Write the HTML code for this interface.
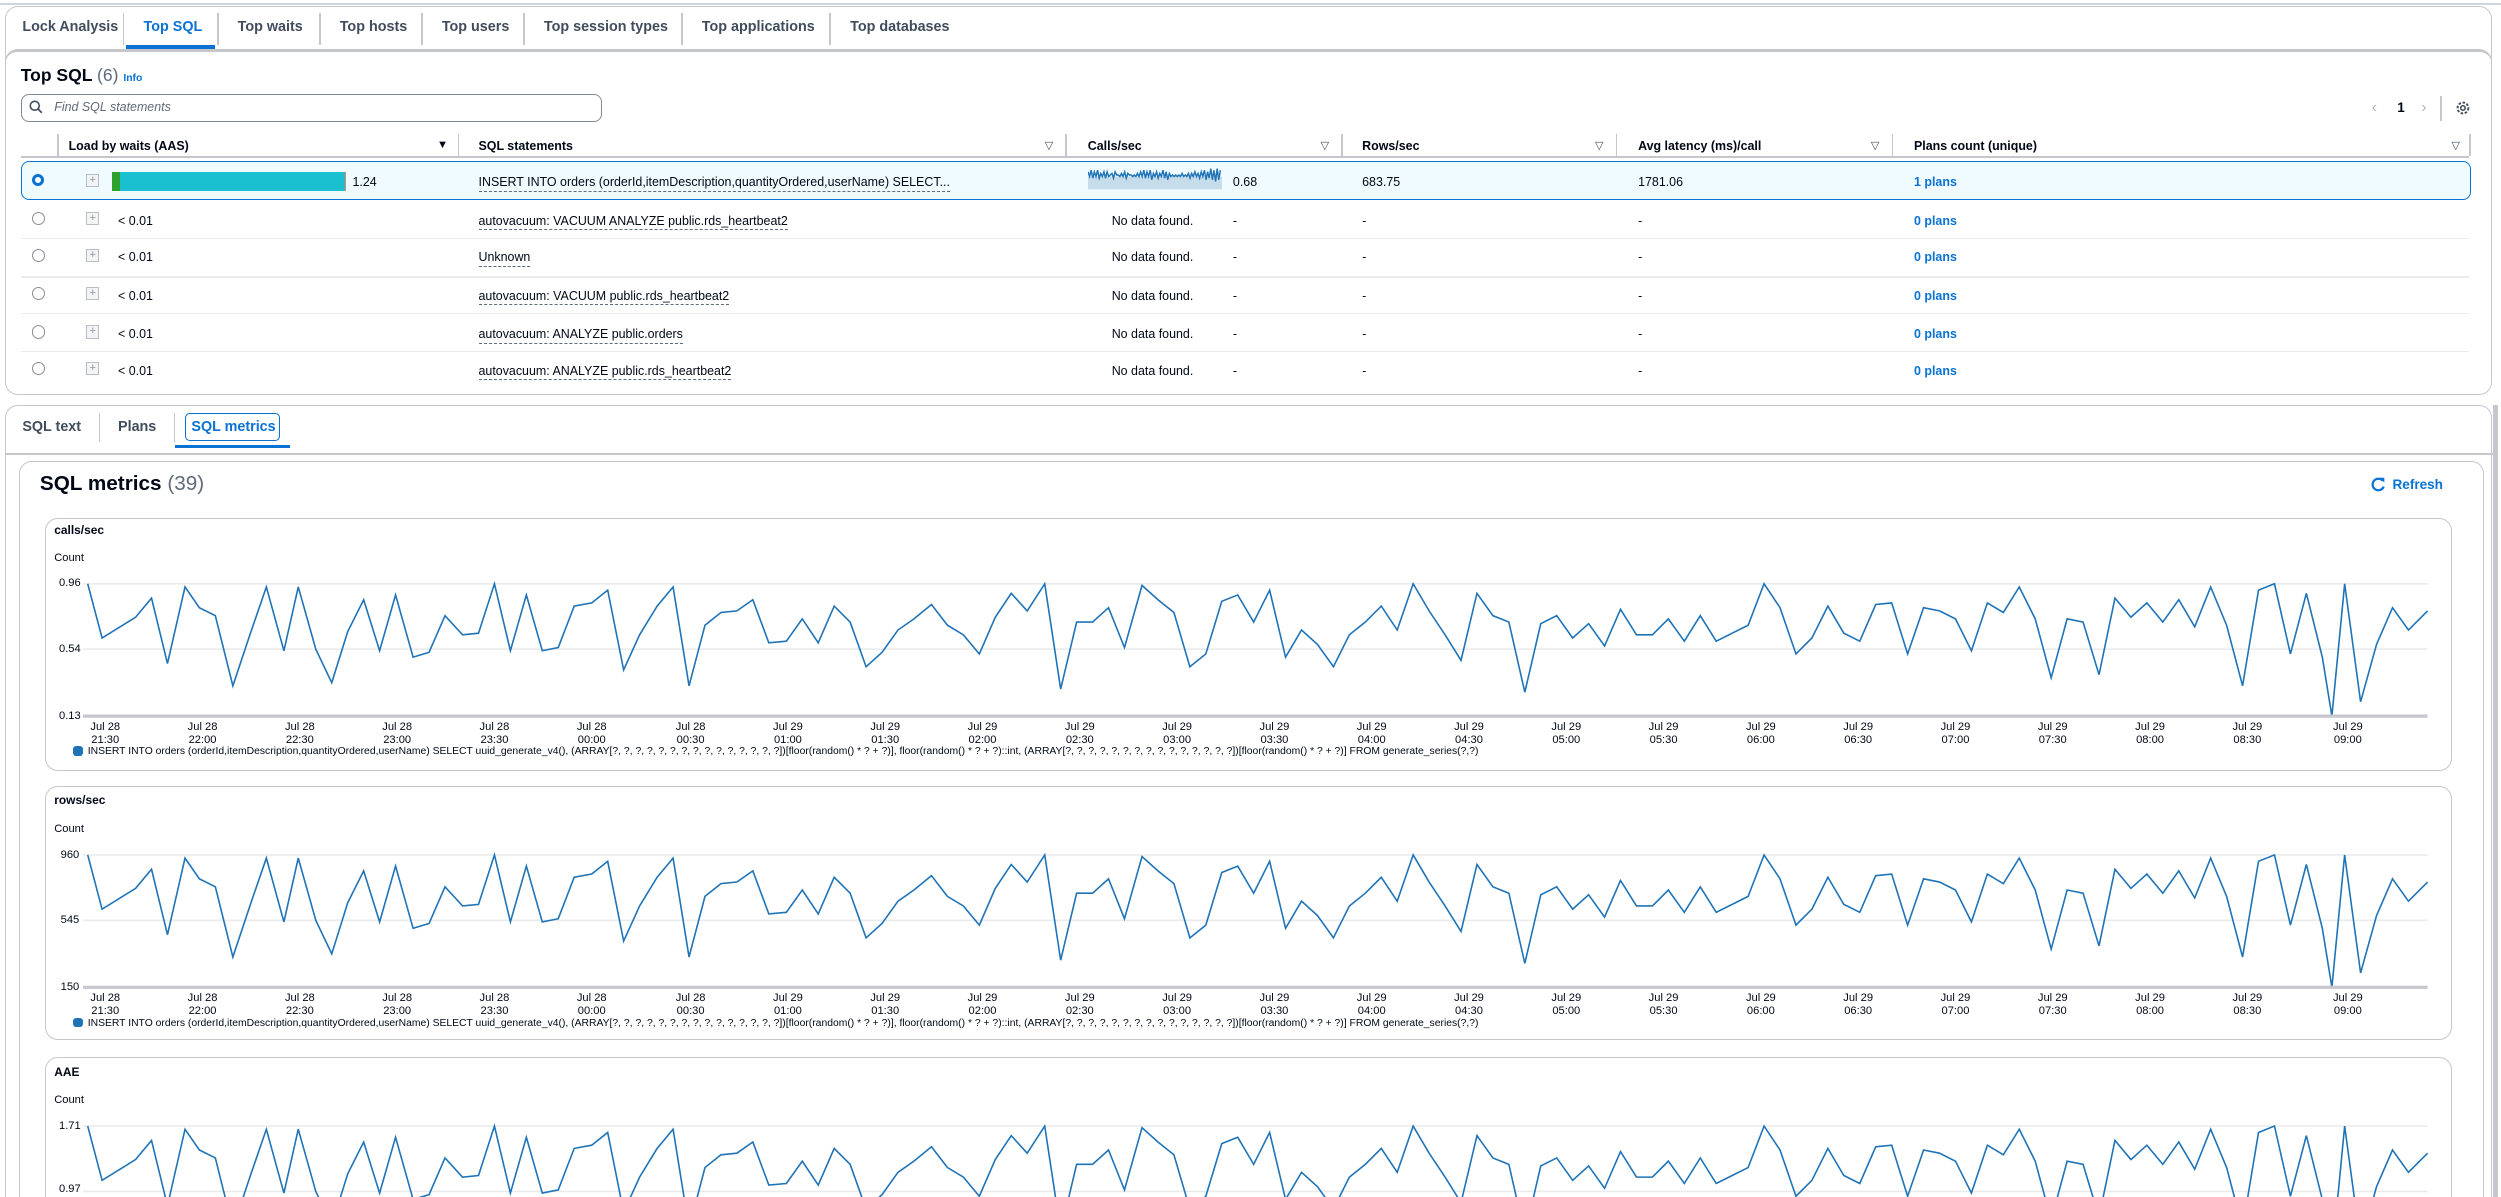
<!DOCTYPE html>
<html><head><meta charset="utf-8">
<style>
html,body{margin:0;padding:0;background:#fff;width:2501px;height:1197px;overflow:hidden}
#w{zoom:1.595;width:1568px;height:751px;position:relative;overflow:hidden;font-family:"Liberation Sans",sans-serif;color:#000716}
.a{position:absolute;white-space:nowrap}
.tab{position:absolute;top:12px;font-size:9px;font-weight:bold;color:#414d5c}
.sep{position:absolute;width:1px;background:#c6c6cd}
.th{position:absolute;top:87px;font-size:7.8px;font-weight:bold;color:#000716}
.tri{position:absolute;top:87px;font-size:7px;color:#414d5c}
.td{position:absolute;font-size:7.8px;color:#000716}
.u{border-bottom:1px dashed #5f6b7a;padding-bottom:1px}
.lnk{color:#0972d3;font-weight:bold}
.rad{position:absolute;left:20px;width:7px;height:7px;border:1px solid #8c8c94;border-radius:50%}
.exp{position:absolute;left:54px;width:7px;height:7px;border:1px solid #b6bec9;background:#f4f4f4;font-size:7px;line-height:7px;text-align:center;color:#8d99a8}
.rowline{position:absolute;left:13px;width:1535px;height:1px;background:#e9ebed}
.xl{position:absolute;font-size:7px;line-height:8px;text-align:center;width:40px;color:#000716}
.yl{position:absolute;font-size:7px;color:#000716}
.leg{position:absolute;left:46px;font-size:6.5px;color:#000716}
.leg i{display:inline-block;width:6px;height:6px;background:#1f73b7;border-radius:2px;margin-right:3px;vertical-align:-1px}
.box{position:absolute;border:1px solid #c6c6cd;border-radius:8px}
</style></head><body><div id="w">
<div class="a" style="left:0;top:2px;width:1568px;height:1px;background:#d1d5db"></div>
<div class="box" style="left:3px;top:4px;width:1558px;height:40px;border-radius:8px 8px 0 0;border-bottom:none"></div>
<div class="tab" style="left:14px">Lock Analysis</div>
<div class="sep" style="left:77px;top:8px;height:20px"></div>
<div class="tab" style="left:90px;color:#0972d3">Top SQL</div>
<div class="a" style="left:79px;top:28px;width:56px;height:3px;background:#0972d3"></div>
<div class="sep" style="left:136px;top:8px;height:20px"></div>
<div class="tab" style="left:149px">Top waits</div>
<div class="sep" style="left:200px;top:8px;height:20px"></div>
<div class="tab" style="left:213px">Top hosts</div>
<div class="sep" style="left:264px;top:8px;height:20px"></div>
<div class="tab" style="left:277px">Top users</div>
<div class="sep" style="left:328px;top:8px;height:20px"></div>
<div class="tab" style="left:341px">Top session types</div>
<div class="sep" style="left:427px;top:8px;height:20px"></div>
<div class="tab" style="left:440px">Top applications</div>
<div class="sep" style="left:520px;top:8px;height:20px"></div>
<div class="tab" style="left:533px">Top databases</div>
<!-- Top SQL panel -->
<div class="box" style="left:3px;top:31px;width:1558px;height:214px;border-top:2px solid #c6c6cd;background:#fff"></div>
<div class="a" style="left:13px;top:41px;font-size:11px;font-weight:bold">Top SQL <span style="font-weight:normal;color:#5f6b7a">(6)</span> <span style="font-size:6.5px;color:#0972d3">Info</span></div>
<div class="a" style="left:13px;top:59px;width:363px;height:16px;border:1px solid #7d8998;border-radius:5px"></div>
<svg class="a" style="left:18px;top:63px" width="9" height="9" viewBox="0 0 9 9"><circle cx="3.6" cy="3.6" r="2.8" fill="none" stroke="#414d5c" stroke-width="1"/><path d="M5.6 5.6L8 8" stroke="#414d5c" stroke-width="1.1"/></svg>
<div class="a" style="left:34px;top:63px;font-size:7.8px;font-style:italic;color:#5f6b7a">Find SQL statements</div>
<div class="a" style="left:1487px;top:62px;font-size:10px;color:#b4b4bb">&#x2039;</div>
<div class="a" style="left:1503px;top:63px;font-size:8.5px;font-weight:bold">1</div>
<div class="a" style="left:1518px;top:62px;font-size:10px;color:#b4b4bb">&#x203A;</div>
<div class="sep" style="left:1530px;top:60px;height:16px"></div>
<svg class="a" style="left:1539px;top:63px" width="10" height="10" viewBox="0 0 10 10"><circle cx="5" cy="5" r="3.4" fill="none" stroke="#414d5c" stroke-width="1.2" stroke-dasharray="1.6 1"/><circle cx="5" cy="5" r="1.4" fill="none" stroke="#414d5c" stroke-width="1"/></svg>
<div class="sep" style="left:36px;top:84px;height:14px"></div>
<div class="th" style="left:43px">Load by waits (AAS)</div><div class="tri" style="left:274px;color:#000716">&#9660;</div>
<div class="sep" style="left:287px;top:84px;height:14px"></div>
<div class="th" style="left:300px">SQL statements</div><div class="tri" style="left:655px">&#9661;</div>
<div class="sep" style="left:668px;top:84px;height:14px"></div>
<div class="th" style="left:682px">Calls/sec</div><div class="tri" style="left:828px">&#9661;</div>
<div class="sep" style="left:841px;top:84px;height:14px"></div>
<div class="th" style="left:854px">Rows/sec</div><div class="tri" style="left:1000px">&#9661;</div>
<div class="sep" style="left:1013px;top:84px;height:14px"></div>
<div class="th" style="left:1027px">Avg latency (ms)/call</div><div class="tri" style="left:1173px">&#9661;</div>
<div class="sep" style="left:1186px;top:84px;height:14px"></div>
<div class="th" style="left:1200px">Plans count (unique)</div><div class="tri" style="left:1537px">&#9661;</div>
<div class="sep" style="left:1548px;top:84px;height:14px"></div>
<div class="a" style="left:13px;top:98px;width:1535px;height:1px;background:#c6c6cd"></div>
<div class="a" style="left:13px;top:101px;width:1535px;height:23px;background:#f0fbff;border:1px solid #0972d3;border-radius:5px"></div>
<div class="a" style="left:20px;top:109px;width:4px;height:4px;border:2.5px solid #0972d3;border-radius:50%;background:#fff"></div>
<div class="exp" style="top:109px">+</div>
<div class="a" style="left:70px;top:108px;width:5px;height:12px;background:#2ea02c"></div>
<div class="a" style="left:75px;top:108px;width:141px;height:12px;background:#1abfd0;border-right:1px solid #f08060"></div>
<div class="td" style="left:221px;top:110px">1.24</div>
<div class="td" style="left:300px;top:110px"><span class="u">INSERT INTO orders (orderId,itemDescription,quantityOrdered,userName) SELECT...</span></div>
<svg class="a" style="left:682px;top:105px" width="84" height="14" viewBox="0 0 84 14"><rect x="0" y="6" width="84" height="8" fill="#c6dcea"/><polyline fill="none" stroke="#1f73b7" stroke-width="0.9" points="0,3 1,6 2,2 3,7 4,3 5,6 6,2 7,7 8,4 9,6 10,3 11,7 12,3 13,6 14,5 15,4 16,7 17,3 18,5 19,5 20,6 21,4 22,6 23,3 24,7 25,4 26,5 27,5 28,6 29,5 30,6 31,4 32,6 33,3 34,6 35,2 36,7 37,3 38,6 39,2 40,8 41,4 42,6 43,3 44,7 45,4 46,6 47,2 48,7 49,3 50,8 51,4 52,6 53,5 54,6 55,5 56,6 57,5 58,6 59,4 60,6 61,5 62,6 63,4 64,7 65,4 66,6 67,3 68,6 69,4 70,7 71,3 72,6 73,2 74,8 75,3 76,7 77,1 78,8 79,2 80,9 81,1 82,8 83,2"/></svg>
<div class="td" style="left:773px;top:110px">0.68</div>
<div class="td" style="left:854px;top:110px">683.75</div>
<div class="td" style="left:1027px;top:110px">1781.06</div>
<div class="td lnk" style="left:1200px;top:110px">1 plans</div>
<div class="rowline" style="top:149px"></div>
<div class="rowline" style="top:173px"></div>
<div class="rowline" style="top:196px"></div>
<div class="rowline" style="top:220px"></div>

<div class="rad" style="top:133px"></div><div class="exp" style="top:133px">+</div>
<div class="td" style="left:74px;top:134px">&lt; 0.01</div>
<div class="td" style="left:300px;top:134px"><span class="u">autovacuum: VACUUM ANALYZE public.rds_heartbeat2</span></div>
<div class="td" style="left:697px;top:134px">No data found.</div><div class="td" style="left:773px;top:134px">-</div>
<div class="td" style="left:854px;top:134px">-</div><div class="td" style="left:1027px;top:134px">-</div>
<div class="td lnk" style="left:1200px;top:134px">0 plans</div>

<div class="rad" style="top:156px"></div><div class="exp" style="top:156px">+</div>
<div class="td" style="left:74px;top:157px">&lt; 0.01</div>
<div class="td" style="left:300px;top:157px"><span class="u">Unknown</span></div>
<div class="td" style="left:697px;top:157px">No data found.</div><div class="td" style="left:773px;top:157px">-</div>
<div class="td" style="left:854px;top:157px">-</div><div class="td" style="left:1027px;top:157px">-</div>
<div class="td lnk" style="left:1200px;top:157px">0 plans</div>

<div class="rad" style="top:180px"></div><div class="exp" style="top:180px">+</div>
<div class="td" style="left:74px;top:181px">&lt; 0.01</div>
<div class="td" style="left:300px;top:181px"><span class="u">autovacuum: VACUUM public.rds_heartbeat2</span></div>
<div class="td" style="left:697px;top:181px">No data found.</div><div class="td" style="left:773px;top:181px">-</div>
<div class="td" style="left:854px;top:181px">-</div><div class="td" style="left:1027px;top:181px">-</div>
<div class="td lnk" style="left:1200px;top:181px">0 plans</div>

<div class="rad" style="top:204px"></div><div class="exp" style="top:204px">+</div>
<div class="td" style="left:74px;top:205px">&lt; 0.01</div>
<div class="td" style="left:300px;top:205px"><span class="u">autovacuum: ANALYZE public.orders</span></div>
<div class="td" style="left:697px;top:205px">No data found.</div><div class="td" style="left:773px;top:205px">-</div>
<div class="td" style="left:854px;top:205px">-</div><div class="td" style="left:1027px;top:205px">-</div>
<div class="td lnk" style="left:1200px;top:205px">0 plans</div>

<div class="rad" style="top:227px"></div><div class="exp" style="top:227px">+</div>
<div class="td" style="left:74px;top:228px">&lt; 0.01</div>
<div class="td" style="left:300px;top:228px"><span class="u">autovacuum: ANALYZE public.rds_heartbeat2</span></div>
<div class="td" style="left:697px;top:228px">No data found.</div><div class="td" style="left:773px;top:228px">-</div>
<div class="td" style="left:854px;top:228px">-</div><div class="td" style="left:1027px;top:228px">-</div>
<div class="td lnk" style="left:1200px;top:228px">0 plans</div>

<!-- lower panel -->
<div class="box" style="left:3px;top:254px;width:1558px;height:520px;border-radius:8px 8px 0 0"></div>
<div class="tab" style="left:14px;top:263px">SQL text</div>
<div class="sep" style="left:62px;top:259px;height:18px"></div>
<div class="tab" style="left:74px;top:263px">Plans</div>
<div class="sep" style="left:109px;top:259px;height:18px"></div>
<div class="a" style="left:116px;top:259px;width:58px;height:16px;border:1px solid #0972d3;border-radius:3px"></div>
<div class="tab" style="left:120px;top:263px;color:#0972d3">SQL metrics</div>
<div class="a" style="left:110px;top:279px;width:72px;height:2px;background:#0972d3"></div>
<div class="a" style="left:3px;top:284px;width:1560px;height:1px;background:#c6c6cd"></div>
<div class="box" style="left:12px;top:289px;width:1544px;height:480px"></div>
<div class="a" style="left:25px;top:296px;font-size:13px;font-weight:bold">SQL metrics <span style="font-weight:normal;color:#5f6b7a">(39)</span></div>
<svg class="a" style="left:1486px;top:299px" width="10" height="10" viewBox="0 0 10 10"><path d="M8 2.4A3.6 3.6 0 1 0 8.6 6" fill="none" stroke="#0972d3" stroke-width="1.4"/><path d="M6 0.5L9 0.5L9 3.5Z" fill="#0972d3"/></svg>
<div class="a" style="left:1500px;top:299px;font-size:8.5px;font-weight:bold;color:#0972d3">Refresh</div>

<div class="box" style="left:28px;top:325px;width:1508px;height:157px"></div>
<div class="box" style="left:28px;top:493px;width:1508px;height:158px"></div>
<div class="box" style="left:28px;top:663px;width:1508px;height:120px"></div>

<div class="a" style="left:34px;top:328px;font-size:7.5px;font-weight:bold">calls/sec</div>
<div class="yl" style="left:34px;top:346px">Count</div>
<div class="yl" style="left:37px;top:362px">0.96</div>
<div class="yl" style="left:37px;top:403px">0.54</div>
<div class="yl" style="left:37px;top:445px">0.13</div>

<div class="a" style="left:34px;top:497px;font-size:7.5px;font-weight:bold">rows/sec</div>
<div class="yl" style="left:34px;top:516px">Count</div>
<div class="yl" style="left:38px;top:532px">960</div>
<div class="yl" style="left:38px;top:573px">545</div>
<div class="yl" style="left:38px;top:615px">150</div>

<div class="a" style="left:34px;top:668px;font-size:7.5px;font-weight:bold">AAE</div>
<div class="yl" style="left:34px;top:686px">Count</div>
<div class="yl" style="left:37px;top:702px">1.71</div>
<div class="yl" style="left:37px;top:742px">0.97</div>

<svg class="a" style="left:0;top:0" width="1568" height="751">
<defs>
<g id="gr">
<line x1="52" y1="366" x2="1522" y2="366" stroke="#e9ebed" stroke-width="1"/>
<line x1="52" y1="407" x2="1522" y2="407" stroke="#e9ebed" stroke-width="1"/>
<polyline fill="none" stroke="#1f73b7" stroke-width="1" points="55,366 64,400 85,387 95,375 105,416 116,368 125,381 135,386 146,430 157,397 167,368 178,408 187,368 198,407 208,428 218,396 228,376 238,408 248,373 259,412 269,409 279,386 290,398 300,397 310,366 320,408 330,373 340,408 350,406 360,380 371,378 381,370 391,420 401,398 412,380 422,368 432,430 442,392 452,384 462,383 472,376 482,403 493,402 503,388 513,403 523,380 533,390 543,418 553,409 563,395 573,388 584,379 594,392 604,398 614,410 624,387 634,372 644,383 655,366 665,432 675,390 685,390 695,381 705,406 716,367 726,376 736,384 746,418 756,410 766,377 776,373 786,390 796,370 806,412 816,395 826,404 836,418 846,398 856,390 866,380 876,395 886,366 896,383 906,398 916,414 926,372 936,386 946,390 956,434 966,391 976,386 986,400 996,391 1006,405 1016,382 1026,398 1036,398 1046,388 1056,402 1066,386 1076,402 1086,397 1096,392 1106,366 1116,381 1126,410 1136,400 1146,380 1156,397 1166,402 1176,379 1186,378 1196,410 1206,381 1216,383 1226,388 1236,408 1246,378 1256,384 1266,368 1276,388 1286,425 1296,388 1306,390 1316,423 1326,375 1336,387 1346,378 1356,390 1366,376 1376,393 1386,368 1396,392 1406,430 1416,370 1426,366 1436,410 1446,372 1456,412 1462,449 1470,366 1480,440 1490,404 1500,381 1510,395 1522,383"/>
<line x1="52" y1="449" x2="1522" y2="449" stroke="#c6c6cd" stroke-width="2"/>
</g>
<clipPath id="cp"><rect x="0" y="700" width="1568" height="51"/></clipPath>
</defs>
<use href="#gr"/>
<use href="#gr" transform="translate(0,170)"/>
<g clip-path="url(#cp)"><use href="#gr" transform="translate(0,340)"/></g>
</svg>

<div class="a" style="left:0;top:452px;width:1568px;height:20px">
<div class="xl" style="left:46px">Jul 28<br>21:30</div><div class="xl" style="left:107px">Jul 28<br>22:00</div><div class="xl" style="left:168px">Jul 28<br>22:30</div><div class="xl" style="left:229px">Jul 28<br>23:00</div><div class="xl" style="left:290px">Jul 28<br>23:30</div><div class="xl" style="left:351px">Jul 28<br>00:00</div><div class="xl" style="left:413px">Jul 28<br>00:30</div><div class="xl" style="left:474px">Jul 29<br>01:00</div><div class="xl" style="left:535px">Jul 29<br>01:30</div><div class="xl" style="left:596px">Jul 29<br>02:00</div><div class="xl" style="left:657px">Jul 29<br>02:30</div><div class="xl" style="left:718px">Jul 29<br>03:00</div><div class="xl" style="left:779px">Jul 29<br>03:30</div><div class="xl" style="left:840px">Jul 29<br>04:00</div><div class="xl" style="left:901px">Jul 29<br>04:30</div><div class="xl" style="left:962px">Jul 29<br>05:00</div><div class="xl" style="left:1023px">Jul 29<br>05:30</div><div class="xl" style="left:1084px">Jul 29<br>06:00</div><div class="xl" style="left:1145px">Jul 29<br>06:30</div><div class="xl" style="left:1206px">Jul 29<br>07:00</div><div class="xl" style="left:1267px">Jul 29<br>07:30</div><div class="xl" style="left:1328px">Jul 29<br>08:00</div><div class="xl" style="left:1389px">Jul 29<br>08:30</div><div class="xl" style="left:1452px">Jul 29<br>09:00</div>
</div>
<div class="leg" style="top:468px"><i></i>INSERT INTO orders (orderId,itemDescription,quantityOrdered,userName) SELECT uuid_generate_v4(), (ARRAY[?, ?, ?, ?, ?, ?, ?, ?, ?, ?, ?, ?, ?, ?, ?])[floor(random() * ? + ?)], floor(random() * ? + ?)::int, (ARRAY[?, ?, ?, ?, ?, ?, ?, ?, ?, ?, ?, ?, ?, ?, ?])[floor(random() * ? + ?)] FROM generate_series(?,?)</div>

<div class="a" style="left:0;top:622px;width:1568px;height:20px">
<div class="xl" style="left:46px">Jul 28<br>21:30</div><div class="xl" style="left:107px">Jul 28<br>22:00</div><div class="xl" style="left:168px">Jul 28<br>22:30</div><div class="xl" style="left:229px">Jul 28<br>23:00</div><div class="xl" style="left:290px">Jul 28<br>23:30</div><div class="xl" style="left:351px">Jul 28<br>00:00</div><div class="xl" style="left:413px">Jul 28<br>00:30</div><div class="xl" style="left:474px">Jul 29<br>01:00</div><div class="xl" style="left:535px">Jul 29<br>01:30</div><div class="xl" style="left:596px">Jul 29<br>02:00</div><div class="xl" style="left:657px">Jul 29<br>02:30</div><div class="xl" style="left:718px">Jul 29<br>03:00</div><div class="xl" style="left:779px">Jul 29<br>03:30</div><div class="xl" style="left:840px">Jul 29<br>04:00</div><div class="xl" style="left:901px">Jul 29<br>04:30</div><div class="xl" style="left:962px">Jul 29<br>05:00</div><div class="xl" style="left:1023px">Jul 29<br>05:30</div><div class="xl" style="left:1084px">Jul 29<br>06:00</div><div class="xl" style="left:1145px">Jul 29<br>06:30</div><div class="xl" style="left:1206px">Jul 29<br>07:00</div><div class="xl" style="left:1267px">Jul 29<br>07:30</div><div class="xl" style="left:1328px">Jul 29<br>08:00</div><div class="xl" style="left:1389px">Jul 29<br>08:30</div><div class="xl" style="left:1452px">Jul 29<br>09:00</div>
</div>
<div class="leg" style="top:638px"><i></i>INSERT INTO orders (orderId,itemDescription,quantityOrdered,userName) SELECT uuid_generate_v4(), (ARRAY[?, ?, ?, ?, ?, ?, ?, ?, ?, ?, ?, ?, ?, ?, ?])[floor(random() * ? + ?)], floor(random() * ? + ?)::int, (ARRAY[?, ?, ?, ?, ?, ?, ?, ?, ?, ?, ?, ?, ?, ?, ?])[floor(random() * ? + ?)] FROM generate_series(?,?)</div>
<div class="a" style="left:1563px;top:254px;width:3px;height:497px;background:#c6c6cd"></div>
</div></body></html>
